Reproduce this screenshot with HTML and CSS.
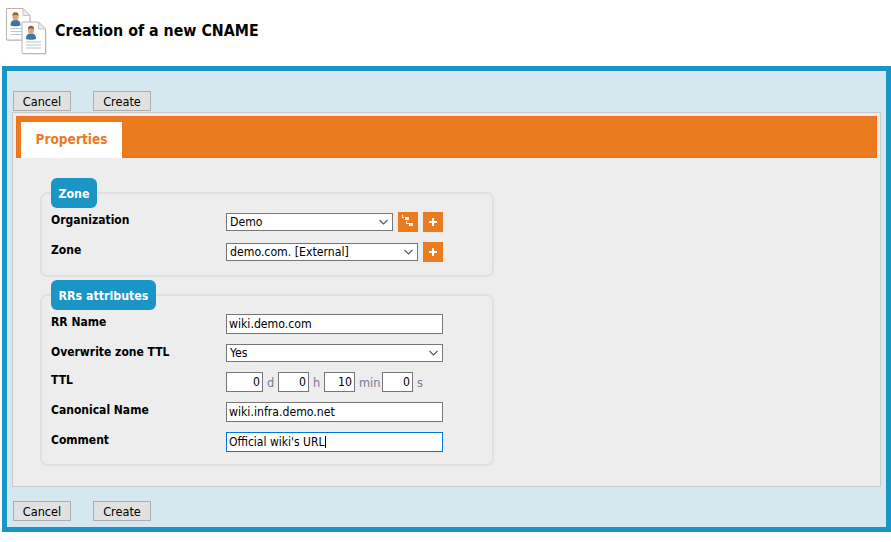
FILE: index.html
```html
<!DOCTYPE html>
<html lang="en">
<head>
<meta charset="utf-8">
<title>Creation of a new CNAME</title>
<link rel="stylesheet" href="styles.css">
</head>
<body>
<header class="page-head">
  <svg class="page-icon" width="44" height="48" viewBox="0 0 44 48" aria-hidden="true">
    <defs>
      <g id="doc">
        <path d="M1.500 2.500H18L25 9.500V33H1.500Z" fill="#b9b9b9" opacity=".55"/>
        <path d="M.5 .5H17L24 7.500V32H.5Z" fill="#fff" stroke="#b5b5b5"/>
        <path d="M17 .5V7.500H24Z" fill="#ececec" stroke="#c4c4c4"/>
        <path d="M4.500 17.500c0-4 1.500-5.500 5-5.500s5 1.500 5 5.500c-2 1-8 1-10 0Z" fill="#3f74a8"/>
        <ellipse cx="9.500" cy="8.500" rx="3.100" ry="4" fill="#dca67a"/>
        <path d="M6.400 8c0-2.700 1.300-3.700 3.100-3.700s3.100 1 3.100 3.700c-1-1.300-5.200-1.300-6.200 0Z" fill="#8a6238"/>
        <path d="M4.500 20.500H19.500M4.500 23.500H19.500M4.500 26.500H19.500" stroke="#b3c8dc" stroke-width="1" fill="none"/>
      </g>
    </defs>
    <use href="#doc" x="0" y="0"/>
    <use href="#doc" x="15.500" y="13.500"/>
  </svg>
  <h1 class="page-title">Creation of a new CNAME</h1>
</header>

<form class="frame">
  <div class="actions actions-top">
    <button class="btn" type="button">Cancel</button>
    <button class="btn" type="button">Create</button>
  </div>

  <section class="panel">
    <nav class="tabbar"><a class="tab">Properties</a></nav>

    <div class="panel-body">
      <fieldset class="group">
        <legend class="group-title">Zone</legend>
        <div class="rows">
          <div class="row">
            <label class="row-label">Organization</label>
            <div class="row-field">
              <select class="select select-org"><option>Demo</option></select>
              <button class="icon-btn" type="button" aria-label="Tree">
                <svg width="20" height="20" viewBox="0 0 20 20"><path d="M4 3h1v2h1v1H4ZM7 5h4v3H7ZM8 9h1v2h2v3h4v-3h-4v1H8Z" fill="#fff"/></svg>
              </button>
              <button class="icon-btn" type="button" aria-label="Add">
                <svg width="20" height="20" viewBox="0 0 20 20"><path d="M9 6h2v3h3v2h-3v3H9v-3H6V9h3Z" fill="#fff"/></svg>
              </button>
            </div>
          </div>
          <div class="row">
            <label class="row-label">Zone</label>
            <div class="row-field">
              <select class="select select-zone"><option>demo.com. [External]</option></select>
              <button class="icon-btn" type="button" aria-label="Add">
                <svg width="20" height="20" viewBox="0 0 20 20"><path d="M9 6h2v3h3v2h-3v3H9v-3H6V9h3Z" fill="#fff"/></svg>
              </button>
            </div>
          </div>
        </div>
      </fieldset>

      <fieldset class="group group-rr">
        <legend class="group-title">RRs attributes</legend>
        <div class="rows">
          <div class="row">
            <label class="row-label">RR Name</label>
            <div class="row-field"><input class="input input-wide" value="wiki.demo.com"></div>
          </div>
          <div class="row">
            <label class="row-label">Overwrite zone TTL</label>
            <div class="row-field"><select class="select input-wide"><option>Yes</option></select></div>
          </div>
          <div class="row">
            <label class="row-label">TTL</label>
            <div class="row-field ttl">
              <input class="input num num-d" value="0"><span class="unit unit-d">d</span>
              <input class="input num" value="0"><span class="unit unit-h">h</span>
              <input class="input num" value="10"><span class="unit unit-min">min</span>
              <input class="input num" value="0"><span class="unit">s</span>
            </div>
          </div>
          <div class="row">
            <label class="row-label">Canonical Name</label>
            <div class="row-field"><input class="input input-wide" value="wiki.infra.demo.net"></div>
          </div>
          <div class="row">
            <label class="row-label">Comment</label>
            <div class="row-field caret-wrap">
              <input class="input input-wide input-focus" value="Official wiki's URL">
              <span class="caret"></span>
            </div>
          </div>
        </div>
      </fieldset>
    </div>
  </section>

  <div class="actions actions-bottom">
    <button class="btn" type="button">Cancel</button>
    <button class="btn" type="button">Create</button>
  </div>
</form>
</body>
</html>
```
FILE: styles.css
```css
* { box-sizing: border-box; }

html, body { margin: 0; padding: 0; background: #fff; }

body {
  font-family: "DejaVu Sans Condensed", "DejaVu Sans", sans-serif;
  font-size: 12px;
  color: #000;
}

.page-head {
  display: flex;
  align-items: flex-start;
  height: 66px;
  padding: 8px 0 0 6px;
}

.page-icon { flex: none; }

.page-title {
  margin: 13px 0 0 5px;
  font-size: 15.800px;
  line-height: 20px;
  font-weight: bold;
}

.frame {
  display: block;
  width: 889px;
  height: 466px;
  margin-left: 2px;
  padding: 20px 5px 6px 5px;
  border: 5px solid #1b95c6;
  background: #d5e7ef;
}

.actions {
  display: flex;
  gap: 22px;
  padding-left: 1px;
}

.actions-top { margin-bottom: 1px; }
.actions-bottom { margin-top: 14px; }

.btn {
  width: 58px;
  height: 20px;
  padding: 2px 0 0;
  border: 1px solid #adadad;
  background: #e1e1e1;
  color: #000;
  font-family: inherit;
  font-size: 12.600px;
  line-height: 16px;
}

.panel {
  height: 375px;
  padding: 3px;
  border: 1px solid #c9c9c9;
  background: #ededed;
}

.tabbar {
  display: flex;
  height: 42px;
  padding: 5px 0 0 4px;
  border: 1px solid #f26c21;
  background: #ea7b1f;
}

.tab {
  display: block;
  width: 101px;
  height: 36px;
  background: #fff;
  color: #ea7b1f;
  font-size: 13.600px;
  font-weight: bold;
  line-height: 34px;
  text-align: center;
}

.panel-body {
  padding: 20px 0 0 24px;
}

.group {
  width: 454px;
  min-width: 0;
  margin: 0;
  padding: 4px 9px 13px;
  border: 2px solid #e0e0e0;
  border-radius: 7px;
}

.group-rr {
  margin-top: 3px;
  padding-bottom: 12px;
}

.group-title {
  height: 30px;
  padding: 2px 7.500px 0;
  border-radius: 6px;
  background: #1b95c6;
  color: #fff;
  font-size: 12.300px;
  font-weight: bold;
  line-height: 28px;
}

.rows {
  display: flex;
  flex-direction: column;
  gap: 10px;
}

.row {
  display: grid;
  grid-template-columns: 175px 1fr;
  align-items: start;
}

.row-label {
  padding-top: 1px;
  font-weight: bold;
  line-height: 15px;
}

.row-field {
  display: flex;
  align-items: center;
  gap: 5px;
}

.select,
.input {
  height: 20px;
  padding: 0 2px;
  border: 1px solid #767676;
  border-radius: 0;
  background-color: #fff;
  color: #000;
  font-family: inherit;
  font-size: 12.200px;
  outline: none;
}

.select {
  height: 18px;
  padding: 0 0 0 3px;
  appearance: none;
  background-image: url("data:image/svg+xml,%3Csvg xmlns='http://www.w3.org/2000/svg' width='9' height='6'%3E%3Cpath d='M.5 1l4 4 4-4' fill='none' stroke='%23555' stroke-width='1.100'/%3E%3C/svg%3E");
  background-repeat: no-repeat;
  background-position: right 4px center;
}

.select-org { width: 167px; }
.select-zone { width: 192px; }
.input-wide { width: 217px; }

.ttl { gap: 4px; }
.num { width: 31px; text-align: right; }
.num-d { width: 37px; }

.unit { color: #7a7a99; font-size: 12.600px; }
.unit-d { width: 7px; }
.unit-h { width: 7px; }
.unit-min { width: 19px; }

.input-focus { border-color: #0078d7; font-size: 12px; }

.icon-btn {
  display: block;
  flex: none;
  width: 20px;
  height: 20px;
  padding: 0;
  border: 0;
  background: #ea7b1f;
}

.icon-btn svg { display: block; }

.caret-wrap { position: relative; }

.caret {
  position: absolute;
  left: 99px;
  top: 4px;
  width: 1px;
  height: 12px;
  background: #000;
}
```
